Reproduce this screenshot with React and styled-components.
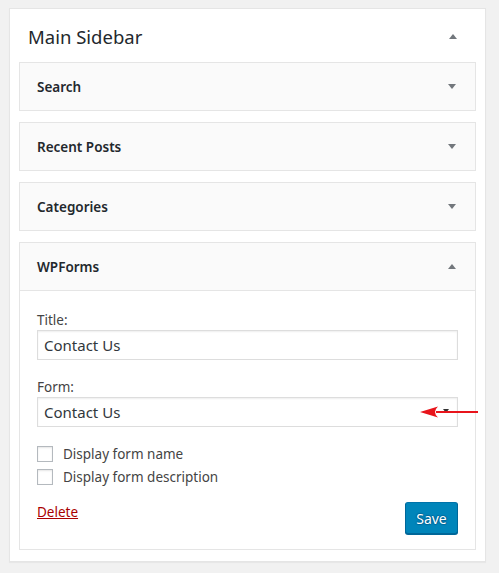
import React from 'react';
import styled, { createGlobalStyle } from 'styled-components';

const GlobalStyle = createGlobalStyle`
  html, body {
    margin: 0;
    padding: 0;
    background: #f1f1f1;
  }
  body {
    font-family: "Noto Sans", "Open Sans", sans-serif;
    color: #444;
  }
  * {
    box-sizing: border-box;
  }
`;

const Page = styled.div`
  padding: 8px 13px 11px 9px;
`;

const Sidebar = styled.div`
  background: #fff;
  border: 1px solid #e5e5e5;
  box-shadow: 0 1px 1px rgba(0, 0, 0, 0.04);
  padding: 0 9px 11px 9px;
`;

const SidebarHeader = styled.div`
  height: 53px;
  display: flex;
  align-items: center;
  justify-content: space-between;
  padding: 2px 19px 0 9px;
`;

const SidebarTitle = styled.h2`
  margin: 0;
  font-size: 18.5px;
  font-weight: 400;
  color: #23282d;
`;

const Caret = styled.span`
  width: 0;
  height: 0;
  border-left: 4.5px solid transparent;
  border-right: 4.5px solid transparent;
  ${p => (p.$up
    ? 'border-bottom: 5px solid #72777c;'
    : 'border-top: 5px solid #72777c;')}
`;

const WidgetList = styled.div`
  display: flex;
  flex-direction: column;
  gap: 11px;
`;

const Widget = styled.div`
  border: 1px solid #e5e5e5;
  background: #fafafa;
`;

const WidgetTop = styled.div`
  display: flex;
  align-items: center;
  justify-content: space-between;
  padding: 0 19px 0 17px;
  border-bottom: ${p => (p.$open ? '1px solid #e5e5e5' : 'none')};
  height: ${p => (p.$open ? '48px' : '47px')};
`;

const WidgetTitle = styled.h3`
  margin: 0;
  font-size: 13.5px;
  font-weight: 600;
  color: #23282d;
`;

const WidgetBody = styled.div`
  background: #fff;
  padding: 19px 17px 15px;
`;

const Label = styled.label`
  display: block;
  font-size: 13.5px;
  line-height: 20px;
  color: #444;
`;

const Field = styled.div`
  margin-bottom: ${p => p.$gap || 0}px;
`;

const TextInput = styled.input`
  display: block;
  width: 100%;
  height: 30px;
  border: 1px solid #ddd;
  box-shadow: inset 0 1px 2px rgba(0, 0, 0, 0.07);
  background: #fff;
  padding: 0 6px;
  font-family: inherit;
  font-size: 15px;
  color: #32373c;
  outline: none;
`;

const SelectWrap = styled.div`
  position: relative;
`;

const SelectBox = styled.div`
  height: 30px;
  border: 1px solid #ddd;
  box-shadow: inset 0 1px 2px rgba(0, 0, 0, 0.07);
  background: #fff;
  display: flex;
  align-items: center;
  justify-content: space-between;
  padding: 0 8px 0 6px;
  font-size: 15px;
  color: #32373c;
`;

const SelectCaret = styled.span`
  width: 0;
  height: 0;
  border-left: 3.5px solid transparent;
  border-right: 3.5px solid transparent;
  border-top: 4px solid #333;
  margin-bottom: 2px;
`;

const Annotation = styled.svg`
  position: absolute;
  left: 383px;
  top: 9px;
  overflow: visible;
`;

const Checks = styled.div`
  display: flex;
  flex-direction: column;
  gap: 7px;
  margin-top: 19px;
`;

const CheckRow = styled.label`
  display: flex;
  align-items: center;
  gap: 10px;
  font-size: 13.5px;
  color: #444;
  height: 16px;
`;

const CheckBox = styled.span`
  width: 16px;
  height: 16px;
  border: 1px solid #b4b9be;
  background: #fff;
  box-shadow: inset 0 1px 2px rgba(0, 0, 0, 0.1);
  flex: none;
`;

const Actions = styled.div`
  display: flex;
  justify-content: space-between;
  align-items: flex-start;
  margin-top: 17px;
`;

const DeleteLink = styled.a`
  color: #a00;
  text-decoration: underline;
  font-size: 13.5px;
  line-height: 20px;
  margin-top: 0;
  cursor: pointer;
`;

const SaveButton = styled.button`
  height: 32px;
  width: 53px;
  padding: 0;
  background: #0085ba;
  border: 1px solid;
  border-color: #0073aa #006799 #006799;
  border-radius: 3px;
  box-shadow: 0 1px 0 #006799;
  color: #fff;
  font-family: inherit;
  font-size: 14px;
  text-shadow: 0 -1px 1px #006799, 1px 0 1px #006799, 0 1px 1px #006799, -1px 0 1px #006799;
  cursor: pointer;
`;

const collapsed = ['Search', 'Recent Posts', 'Categories'];

export default function App() {
  return (
    <>
      <GlobalStyle />
      <Page>
        <Sidebar>
          <SidebarHeader>
            <SidebarTitle>Main Sidebar</SidebarTitle>
            <Caret $up />
          </SidebarHeader>
          <WidgetList>
            {collapsed.map(name => (
              <Widget key={name}>
                <WidgetTop>
                  <WidgetTitle>{name}</WidgetTitle>
                  <Caret />
                </WidgetTop>
              </Widget>
            ))}
            <Widget>
              <WidgetTop $open>
                <WidgetTitle>WPForms</WidgetTitle>
                <Caret $up />
              </WidgetTop>
              <WidgetBody>
                <Field $gap={17}>
                  <Label>Title:</Label>
                  <TextInput defaultValue="Contact Us" />
                </Field>
                <Field>
                  <Label>Form:</Label>
                  <SelectWrap>
                    <SelectBox>
                      <span>Contact Us</span>
                      <SelectCaret />
                    </SelectBox>
                    <Annotation width="58" height="12" viewBox="0 0 58 12">
                      <path d="M16 6 H58" stroke="#e8141b" strokeWidth="2" />
                      <path d="M0 6 L18 0.5 Q12 6 18 11.5 Z" fill="#e8141b" />
                    </Annotation>
                  </SelectWrap>
                </Field>
                <Checks>
                  <CheckRow>
                    <CheckBox />
                    Display form name
                  </CheckRow>
                  <CheckRow>
                    <CheckBox />
                    Display form description
                  </CheckRow>
                </Checks>
                <Actions>
                  <DeleteLink>Delete</DeleteLink>
                  <SaveButton>Save</SaveButton>
                </Actions>
              </WidgetBody>
            </Widget>
          </WidgetList>
        </Sidebar>
      </Page>
    </>
  );
}
